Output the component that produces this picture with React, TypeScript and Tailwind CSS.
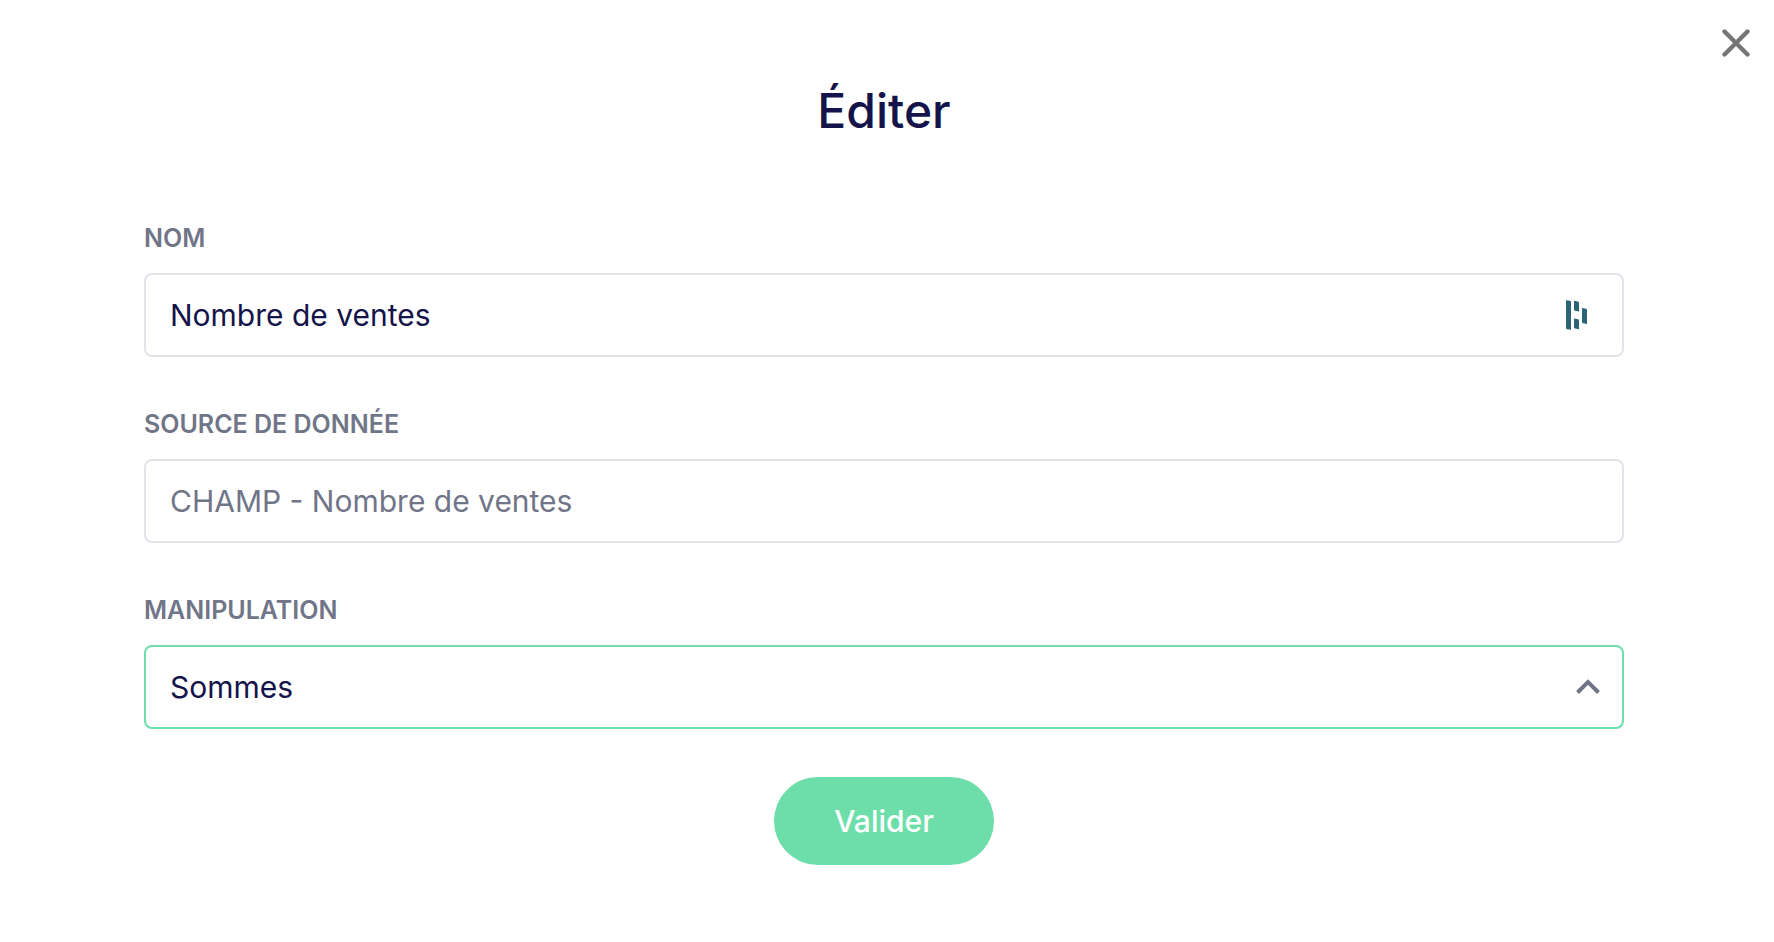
import { useState } from 'react'
import type { ReactNode } from 'react'

interface FieldProps {
  id: string
  label: string
  children: ReactNode
}

const CONTROL_CLASSES =
  'block h-[84px] w-full appearance-none rounded-lg border-2 bg-white px-6 text-[30px] outline-none'

function Field({ id, label, children }: FieldProps) {
  return (
    <div>
      <label
        htmlFor={id}
        className="mb-[19px] block text-[25px] leading-8 font-semibold text-[#717588] uppercase"
      >
        {label}
      </label>
      <div className="relative">{children}</div>
    </div>
  )
}

function CloseIcon() {
  return (
    <svg width="28" height="28" viewBox="0 0 28 28" fill="none" aria-hidden="true">
      <path d="M2.5 2.5L25.5 25.5M25.5 2.5L2.5 25.5" stroke="#757575" strokeWidth="4.4" strokeLinecap="round" />
    </svg>
  )
}

function ChevronUpIcon() {
  return (
    <svg width="24" height="16" viewBox="0 0 24 16" fill="none" aria-hidden="true">
      <path d="M1.5 13.5L12 3L22.5 13.5" stroke="#717588" strokeWidth="4" />
    </svg>
  )
}

function PasswordManagerIcon() {
  return (
    <svg width="22" height="30" viewBox="0 0 22 30" fill="#2c6376" aria-hidden="true">
      <path d="M0 0.3L4 0.8Q5 1 5 2V29.7L1 29.2Q0 29 0 28Z" />
      <path d="M8 0.8L12 1.6Q13 2 13 3V11.6L9 10.8Q8 10.5 8 9.5Z" />
      <path d="M8 18.5L12 19.3Q13 19.6 13 20.6V29.3L9 28.5Q8 28.2 8 27.2Z" />
      <path d="M16 8L20 8.8Q21 9.1 21 10.1V24L17 23.2Q16 22.9 16 21.9Z" />
    </svg>
  )
}

export default function App() {
  const [name, setName] = useState('Nombre de ventes')
  const [operation, setOperation] = useState('sum')

  return (
    <main className="relative bg-white pt-[81px] pr-[150px] pb-[76px] pl-36 font-['Inter',sans-serif] text-[#14134a]">
      <button type="button" aria-label="Fermer" className="absolute top-[29px] right-6 cursor-pointer">
        <CloseIcon />
      </button>

      <h1 className="text-center text-[48px] leading-[60px] font-medium">Éditer</h1>

      <form className="mt-[81px]" onSubmit={(e) => e.preventDefault()}>
        <div className="space-y-[51px]">
          <Field id="name" label="Nom">
            <input
              id="name"
              type="text"
              value={name}
              onChange={(e) => setName(e.target.value)}
              className={`${CONTROL_CLASSES} border-[#e0e4e9]`}
            />
            <span className="pointer-events-none absolute inset-y-0 right-9 flex items-center">
              <PasswordManagerIcon />
            </span>
          </Field>

          <Field id="source" label="Source de donnée">
            <input
              id="source"
              type="text"
              readOnly
              value="CHAMP - Nombre de ventes"
              className={`${CONTROL_CLASSES} border-[#e0e4e9] text-[#717588]`}
            />
          </Field>

          <Field id="operation" label="Manipulation">
            <select
              id="operation"
              value={operation}
              onChange={(e) => setOperation(e.target.value)}
              className={`${CONTROL_CLASSES} border-[#6ddeaa]`}
            >
              <option value="sum">Sommes</option>
            </select>
            <span className="pointer-events-none absolute inset-y-0 right-6 flex items-center">
              <ChevronUpIcon />
            </span>
          </Field>
        </div>

        <div className="mt-12 flex justify-center">
          <button
            type="submit"
            className="h-[88px] cursor-pointer rounded-full bg-[#6ddeaa] px-[60px] text-[30px] font-medium text-white"
          >
            Valider
          </button>
        </div>
      </form>
    </main>
  )
}
